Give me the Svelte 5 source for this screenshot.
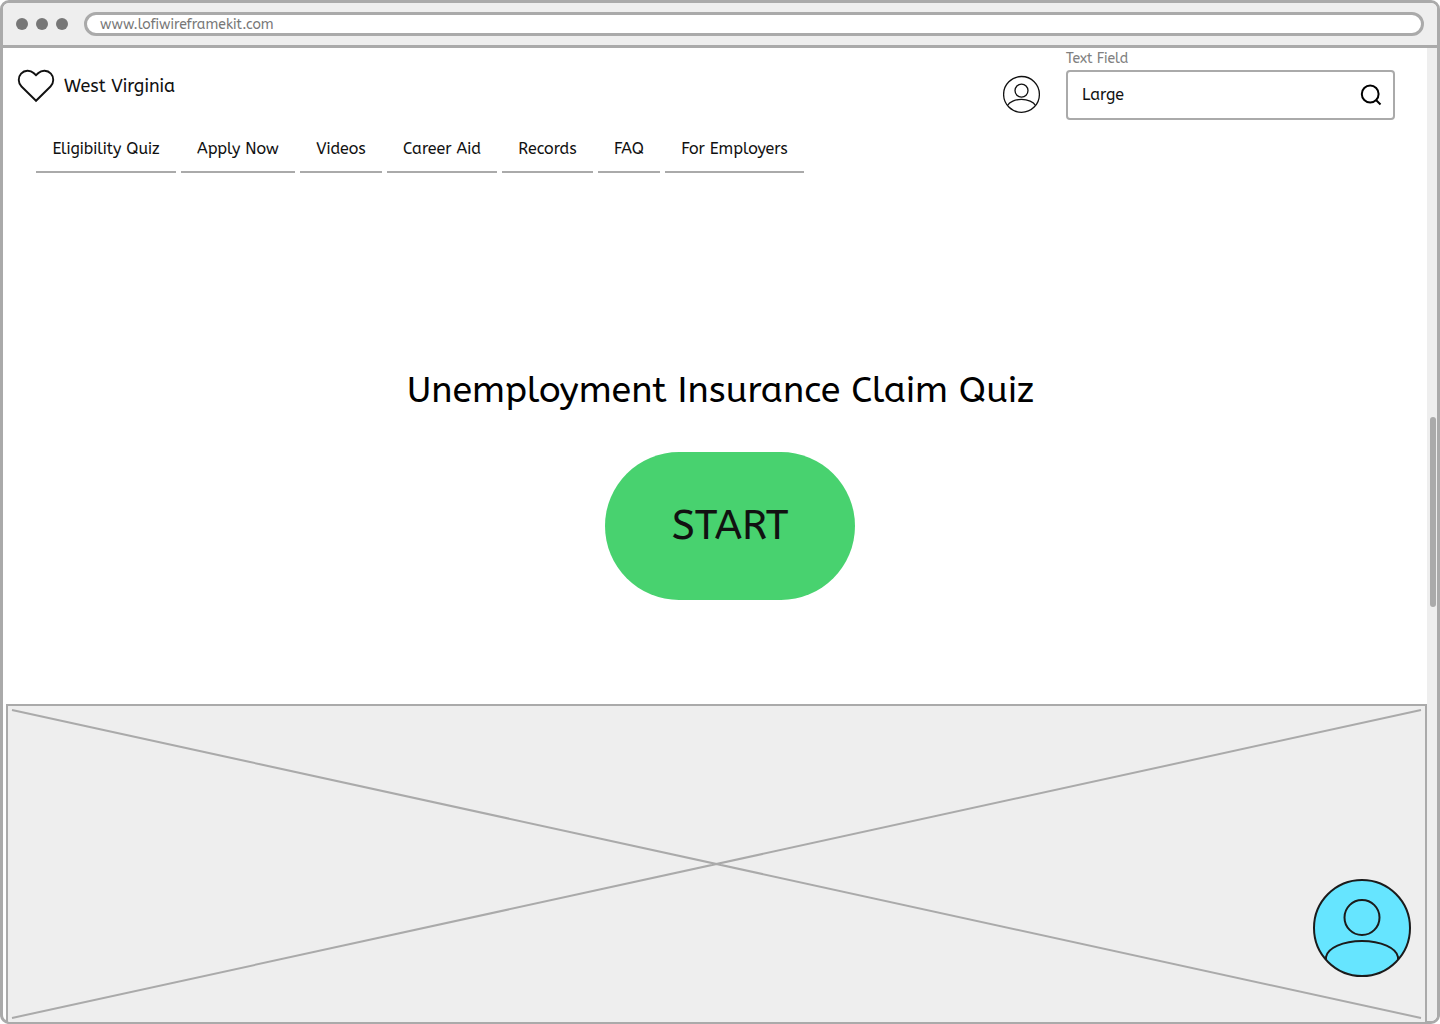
<script>
  const tabs = [
    { label: 'Eligibility Quiz', width: 140 },
    { label: 'Apply Now', width: 114 },
    { label: 'Videos', width: 82 },
    { label: 'Career Aid', width: 110 },
    { label: 'Records', width: 91 },
    { label: 'FAQ', width: 62 },
    { label: 'For Employers', width: 139 }
  ];
</script>

<div class="browser">
  <header class="chrome">
    <div class="dots"><i></i><i></i><i></i></div>
    <div class="address"><span>www.lofiwireframekit.com</span></div>
  </header>

  <div class="viewport">
    <main>
      <div class="top">
        <div class="brand">
          <svg class="heart" width="38" height="34" viewBox="0 0 38 34">
            <path d="M19 31.800 L4.500 17.500 C.9 13.900 .9 8 4.100 4.600 C7.600 .9 13.200 .8 16.600 4 L19 6.300 L21.400 4 C24.800 .8 30.400 .9 33.900 4.600 C37.100 8 37.100 13.900 33.500 17.500 Z" />
          </svg>
          <span>West Virginia</span>
        </div>
        <div class="tools">
          <svg class="account" width="38" height="38" viewBox="0 0 38 38">
            <circle cx="18.5" cy="19.4" r="17.9" />
            <circle cx="18.5" cy="15.6" r="6.500" />
            <path d="M4.700 30.200C6.300 26.800 12.200 24.400 18.500 24.400S30.700 26.800 32.300 30.200" />
          </svg>
          <div class="field">
            <label for="search"><span>Text Field</span></label>
            <div class="input" id="search">
              <span>Large</span>
              <svg width="24" height="24" viewBox="0 0 24 24">
                <circle cx="11.2" cy="11" r="8.400" /><path d="M17 17 L21.500 21.500" />
              </svg>
            </div>
          </div>
        </div>
      </div>

      <nav>
        {#each tabs as tab}
          <div class="tab" style:width="{tab.width}px"><span>{tab.label}</span></div>
        {/each}
      </nav>

      <section class="hero">
        <h1>Unemployment Insurance Claim Quiz</h1>
        <button>START</button>
      </section>

      <div class="placeholder">
        <svg class="cross" viewBox="0 0 1417 316" preserveAspectRatio="none">
          <path d="M4 4 L1413 312 M4 312 L1413 4" />
        </svg>
        <svg class="assistant" width="98" height="98" viewBox="0 0 98 98">
          <circle class="disc" cx="49" cy="49" r="48" />
          <circle cx="49" cy="38.5" r="17.5" />
          <path d="M13 80.500V78C14.500 69 30 62 49 62S83.500 69 85 78V80.500" />
        </svg>
      </div>
    </main>
    <aside><div class="thumb"></div></aside>
  </div>
</div>

<style>
  :global(body) { margin: 0; background: #fff; }
  .browser, .browser * { box-sizing: border-box; }
  .browser {
    width: 1440px; height: 1024px;
    display: flex; flex-direction: column;
    border: 3px solid #aaa; border-radius: 9px;
    background: #fff; color: #111;
    font-family: ABeeZee, "Noto Sans", sans-serif;
    white-space: nowrap;
  }
  svg { display: block; fill: none; stroke: #111; flex: none; }
  .chrome {
    height: 45px; flex: none;
    display: flex; align-items: center; gap: 16px;
    padding: 0 13px;
    background: #eee; border-bottom: 3px solid #aaa;
    border-radius: 6px 6px 0 0;
  }
  .dots { display: flex; gap: 8px; }
  .dots i { width: 12px; height: 12px; border-radius: 50%; background: #777; }
  .address {
    flex: 1; height: 24px; display: flex; align-items: center;
    border: 3px solid #aaa; border-radius: 12px;
    padding: 2px 0 0 13px; background: #fff;
    color: #777; font-size: 14px; line-height: 18px;
  }
  .viewport { flex: 1; display: flex; min-height: 0; }
  main { flex: 1; display: flex; flex-direction: column; min-width: 0; }
  .top { height: 80px; display: flex; justify-content: space-between; padding: 0 32px 0 14px; }
  .brand { display: flex; align-items: center; gap: 9px; height: 76px; font-size: 18px; }
  .heart { stroke-width: 1.900; }
  .tools { display: flex; gap: 25px; }
  .account { margin-top: 27px; stroke-width: 1.300; }
  .field { width: 329px; }
  label { display: block; height: 22px; padding-top: 1px; font-size: 14px; line-height: 20px; color: #808080; }
  .input {
    height: 50px; display: flex; align-items: center; justify-content: space-between;
    border: 2px solid #aaa; border-radius: 4px; padding: 0 10px 0 14px;
    font-size: 16px;
  }
  .input span { padding-bottom: 2px; }
  .input svg { stroke-width: 2; stroke: #000; }
  nav { display: flex; gap: 5px; padding-left: 33px; height: 45px; }
  .tab {
    display: flex; justify-content: center; align-items: center;
    border-bottom: 2px solid #aaa; font-size: 16px; padding-bottom: 2px;
  }
  .hero { flex: 1; display: flex; flex-direction: column; align-items: center; padding-top: 192px; }
  h1 { margin: 0 0 37px; padding-left: 11px; font-weight: 400; font-size: 36px; line-height: 50px; color: #000; }
  button {
    width: 250px; height: 148px; margin-left: 30px; padding: 0 0 2px;
    border: 0; border-radius: 74px; background: #48d26f;
    color: #111; font: inherit; font-size: 40.800px;
  }
  .placeholder {
    position: relative; height: 320px; flex: none;
    margin: 0 0 -3px 3px; border: 2px solid #aaa; background: #eee;
    border-bottom-left-radius: 3px;
  }
  .cross { width: 100%; height: 100%; stroke: #aaa; stroke-width: 2; }
  .assistant { position: absolute; right: 14px; top: 173px; stroke: #1b1b1b; stroke-width: 2; }
  .disc { fill: #66e5ff; }
  aside {
    width: 10px; flex: none; padding: 369px 1px 0 3px;
    background: #eee; border-bottom-right-radius: 6px;
  }
  .thumb { height: 190px; border-radius: 3px; background: #aaa; }
</style>
